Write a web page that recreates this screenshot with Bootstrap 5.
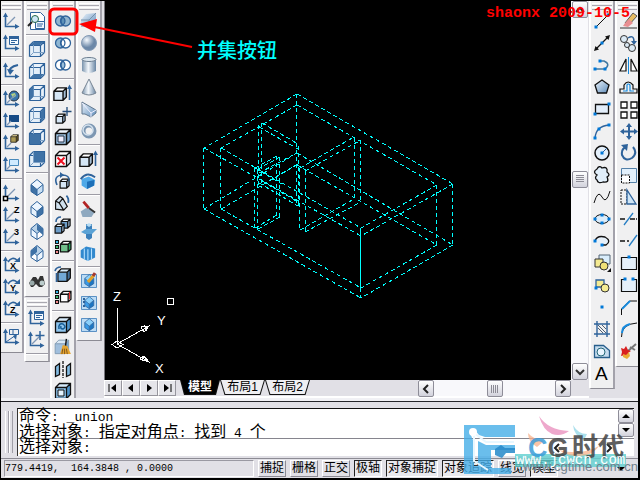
<!DOCTYPE html>
<html lang="zh-CN">
<head>
<meta charset="utf-8">
<meta name="viewport" content="width=device-width, initial-scale=1">
<title>并集 union</title>
<link href="https://cdn.jsdelivr.net/npm/bootstrap@5.3.0/dist/css/bootstrap.min.css" rel="stylesheet">
<style>
body{background:#e1e0e6;color:#000;font-family:"Liberation Sans","Noto Sans CJK SC",sans-serif;border:1px solid #000;border-right-width:2px;border-bottom-width:2px;overflow:hidden}
button{padding:0;border:0;background:none;color:#000}
.workarea,.pane{min-height:0;min-width:0}
.tb{width:26px;background:#f0f0f1;border-left:2px solid #fff;border-right:2px solid #a3a2ab;border-bottom:1px solid #8c8b94;padding-bottom:4px;margin-bottom:1px}
.tb-first{width:23px;border-left:0}
.tb-last{width:23px;border-right:0}
.grip{height:9px;padding:2px 1px 0}
.grip i{display:block;height:3px;border-top:1px solid #fff;border-bottom:1px solid #a9a8b0;margin-bottom:1px}
.tool{height:22px;width:22px;line-height:0}
.tool svg{width:22px;height:22px;overflow:visible}
.rule-line{height:6px;padding-top:2px}
.rule-line i{display:block;height:2px;background:#9d9ca5;border-bottom:1px solid #fff}
.bars-left{margin-right:2px}
.drawing{background:#000;min-width:0;min-height:0;border-left:1px solid #77767d}
.drawing svg{display:block}
.vscroll{width:17px;background:#f9f9fc;margin-right:1px}
.above{flex:153}
.below{flex:176}
.sb{width:16px;height:17px;border:1px solid #8e8d98;border-radius:2px;background:linear-gradient(#fff,#d2d2dc);line-height:0}
.sb svg{width:10px;height:10px}
.sb-short{height:14px}
.sb-flat{border:0;background:none;height:16px}
.sheetbar{height:18px;border-bottom:2px solid #fff;margin-bottom:3px}
.navb{width:18px;height:16px;border:1px solid #fff;border-right-color:#96959d;border-bottom-color:#96959d;background:#e5e5ea;line-height:0}
.navb svg{width:12px;height:12px}
.sheet{height:15px;font-size:12px;line-height:14px;width:45px;clip-path:polygon(0 0,100% 0,90% 100%,10% 100%);background:#111;padding:0 1px 1px}
.sheet span{display:block;height:14px;background:#eeeef1;clip-path:polygon(0 0,100% 0,90% 100%,10% 100%)}
.sheet.current{width:40px;font-weight:700;color:#fff}
.sheet.current span{background:#000}
.hscroll{width:153px;height:16px;background:#f8f8fb;margin-right:18px}
.cmd{border-top:1px solid #24242a;padding:6px 4px 2px 4px;box-shadow:0 -3px 0 #f1f1f5;position:relative}
.cmdgrip{width:8px;margin:3px 4px 3px 0}
.cmdgrip i{width:4px;border-left:1px solid #fff;border-right:1px solid #9f9ea7}
.cmdtext{background:#fff;border-top:1px solid #111;border-left:1px solid #333;font-size:16px;line-height:14px}
.mono{font-family:"Liberation Mono",monospace;font-size:13px}
.history{height:29px;padding-left:1px;white-space:pre}
.prompt{border-top:1px solid #86858e;height:18px;padding:1px 0 0 1px}
.prompt input{border:0;outline:0;background:transparent;height:14px;min-width:0}
.prompt-nav{width:68px;margin-right:17px}
.status{height:20px;border-top:1px solid #8c8b94;padding:1px 3px;font-size:12px;line-height:16px;gap:4px}
.coords{width:250px;height:17px;border:1px solid #9a99a2;border-right-color:#fff;border-bottom-color:#fff;font-family:"Liberation Mono",monospace;font-size:10px;line-height:16px;white-space:pre}
.mode{height:17px;padding:0 1px;border:1px solid #fff;border-right-color:#8c8b94;border-bottom-color:#8c8b94;white-space:nowrap;line-height:15px}
.mode.on{border-color:#222 #fff #fff #222;background:#e9e9ee}
.overlay{left:0;top:0;pointer-events:none}
.stamp{right:8px;top:4px;color:#f00;font:700 15px/18px "Liberation Mono",monospace}
.callout{left:196px;top:37px;color:#0ff;font-size:20px;line-height:24px;font-weight:500;font-family:"Noto Sans CJK SC",sans-serif}
.brand{right:10px;bottom:3px;width:165px;height:55px;pointer-events:none;overflow:visible}
</style>
<script src="https://cdn.jsdelivr.net/npm/bootstrap@5.3.0/dist/js/bootstrap.bundle.min.js"></script>
</head>
<body class="d-flex flex-column vh-100 position-relative">
<svg width="0" height="0" class="position-absolute" aria-hidden="true"><defs>
<linearGradient id="gb" x2="1" y2="1"><stop stop-color="#eef5fc"/><stop offset="1" stop-color="#5f8dbb"/></linearGradient>
<linearGradient id="gh"><stop stop-color="#7892ac"/><stop offset=".45" stop-color="#f4f8fc"/><stop offset="1" stop-color="#6885a3"/></linearGradient>
<radialGradient id="gs" cx=".35" cy=".3"><stop stop-color="#f6faff"/><stop offset="1" stop-color="#6c88a8"/></radialGradient>
</defs></svg>

<main class="workarea d-flex flex-grow-1 overflow-hidden">
  <div class="bars-left d-flex align-items-start" id="left"></div>
  <section class="pane d-flex flex-column flex-grow-1">
    <div class="pane d-flex flex-grow-1">
      <div class="drawing flex-grow-1 overflow-hidden">
        <svg width="466" height="380" viewBox="105 1 466 380" role="img" aria-label="线框模型">
          <g fill="none" stroke="#0ff" stroke-width="1" stroke-dasharray="4 3" shape-rendering="crispEdges">
            <path d="M297 94L204 148M297 94L453 184M204 148L361 236M453 184L361 236"/>
            <path d="M297 105L221 148M297 105L437 185M221 148L361 228M437 185L361 228"/>
            <path d="M297 153L204 209M297 153L453 245M204 209L361 298M453 245L361 298"/>
            <path d="M297 165L221 209M297 165L437 245M221 209L361 288M437 245L361 288"/>
            <path d="M203.500 148V209M220.500 148V209M436.500 185V245M452.500 184V245M296.500 94V206M360.500 288V298"/>
            <path d="M258.500 125V185M261.500 123V188M298.500 146V206M262 123L298 144M259 127L298 149M259 183L298 206M262 181L298 202"/>
            <path d="M254.500 168V228M257.500 170V230M276.500 156V216M279.500 157V217M255 168L277 156M258 169L280 157M255 228L277 215M258 229L280 217"/>
            <path d="M299.500 168V230M305.500 171V232M354.500 138V200M360.500 140V202M300 168L354 137M305 171L361 140M300 230L354 199M305 232L361 202"/>
            <path d="M255 168L282 184M259 173L297 153M270 180L298 164"/>
          </g>
          <path d="M360.500 228V288" stroke="#0ff" shape-rendering="crispEdges"/>
          <g fill="none" stroke="#fff" shape-rendering="crispEdges">
            <path d="M117.500 308V344M117 344L149 326M117 344L149 362M112 344.500L117 341L123 344.500L117 348ZM149 326L141 327L144 332ZM144 325L147 331M149 362L140 359L144 356ZM145 356L142 361"/>
            <rect x="167.500" y="298.500" width="6" height="6"/>
          </g>
          <g fill="#fff" font-family="Liberation Sans" font-size="13"><text x="113" y="301">Z</text><text x="157" y="325">Y</text><text x="155" y="373">X</text></g>
        </svg>
      </div>
      <div class="vscroll d-flex flex-column align-items-center">
        <button class="sb" aria-label="向上"><svg viewBox="0 0 10 10"><path d="M1 7l4-4 4 4" fill="none" stroke="#333" stroke-width="2"/></svg></button>
        <div class="above"></div>
        <button class="sb" aria-label="滑块"><svg viewBox="0 0 10 10"><path d="M1 1.500h8M1 3.500h8M1 5.500h8M1 7.500h8" stroke="#8d8c96"/></svg></button>
        <div class="below"></div>
        <button class="sb" aria-label="向下"><svg viewBox="0 0 10 10"><path d="M1 3l4 4 4-4" fill="none" stroke="#333" stroke-width="2"/></svg></button>
      </div>
    </div>
    <div class="sheetbar d-flex align-items-start">
      <button class="navb" aria-label="首页"><svg viewBox="0 0 12 12"><path d="M2 2v8" stroke="#000"/><path d="M9 2v8L4 6z"/></svg></button>
      <button class="navb" aria-label="上一页"><svg viewBox="0 0 12 12"><path d="M8 2v8L3 6z"/></svg></button>
      <button class="navb" aria-label="下一页"><svg viewBox="0 0 12 12"><path d="M4 2v8l5-4z"/></svg></button>
      <button class="navb me-1" aria-label="末页"><svg viewBox="0 0 12 12"><path d="M10 2v8" stroke="#000"/><path d="M3 2v8l5-4z"/></svg></button>
      <button class="sheet current"><span>模型</span></button>
      <button class="sheet"><span>布局1</span></button>
      <button class="sheet"><span>布局2</span></button>
      <div class="hscroll d-flex justify-content-between ms-auto">
        <button class="sb" aria-label="向左"><svg viewBox="0 0 10 10"><path d="M7 1L3 5l4 4" fill="none" stroke="#222" stroke-width="2"/></svg></button>
        <button class="sb" aria-label="滑块"><svg viewBox="0 0 10 10"><path d="M1.500 1v8M3.500 1v8M5.500 1v8M7.500 1v8" stroke="#8d8c96"/></svg></button>
        <button class="sb" aria-label="向右"><svg viewBox="0 0 10 10"><path d="M3 1l4 4-4 4" fill="none" stroke="#222" stroke-width="2"/></svg></button>
      </div>
    </div>
  </section>
  <div class="d-flex align-items-start" id="right"></div>
</main>

<section class="cmd d-flex">
  <div class="cmdgrip d-flex"><i></i><i></i></div>
  <div class="cmdtext flex-grow-1">
    <div class="d-flex">
      <div class="history flex-grow-1"><div>命令<span class="mono">: _union</span></div><div>选择对象<span class="mono">: </span>指定对角点<span class="mono">: </span>找到<span class="mono"> 4 </span>个</div></div>
      <div class="d-flex flex-column">
        <button class="sb sb-short" aria-label="上滚"><svg viewBox="0 0 10 10"><path d="M1 7l4-4 4 4z"/></svg></button>
        <button class="sb sb-short" aria-label="下滚"><svg viewBox="0 0 10 10"><path d="M1 3l4 4 4-4z"/></svg></button>
      </div>
    </div>
    <div class="prompt d-flex"><label for="c">选择对象<span class="mono">:</span></label><input id="c" class="flex-grow-1" type="text">
      <div class="prompt-nav d-flex justify-content-between">
        <button class="sb sb-flat" aria-label="左滚"><svg viewBox="0 0 10 10"><path d="M7 1L3 5l4 4" fill="none" stroke="#222" stroke-width="2"/></svg></button>
        <button class="sb sb-flat" aria-label="右滚"><svg viewBox="0 0 10 10"><path d="M3 1l4 4-4 4" fill="none" stroke="#222" stroke-width="2"/></svg></button>
      </div>
    </div>
  </div>
</section>

<footer class="status d-flex">
  <div class="coords">779.4419,  164.3848 , 0.0000</div>
  <button class="mode">捕捉</button><button class="mode">栅格</button><button class="mode">正交</button><button class="mode on">极轴</button><button class="mode on">对象捕捉</button><button class="mode on">对象追踪</button><button class="mode">线宽</button><button class="mode on">模型</button>
  <button class="ms-auto me-2" aria-label="状态栏菜单"><svg width="12" height="8" viewBox="0 0 12 8"><path d="M2 2h8L6 6z"/></svg></button>
</footer>

<svg class="overlay position-absolute" width="200" height="60" viewBox="1 1 200 60" aria-hidden="true">
  <rect x="50" y="9" width="27" height="25" rx="4" fill="none" stroke="#f00" stroke-width="3"/>
  <path d="M192 47L92 26.500" stroke="#f00" stroke-width="2"/><path d="M79 24l18-5-2 13z" fill="#f00"/>
</svg>
<div class="callout position-absolute">并集按钮</div>
<div class="stamp position-absolute">shaonx 2009-10-5</div>
<svg class="brand position-absolute" viewBox="464 420 165 55">
  <rect x="516" y="454" width="111" height="13" fill="#5fd0cf" opacity=".8"/>
  <g opacity=".75"><path fill="#e98bbb" d="M540 416q9 14 30 15q-8 6-17 3q-9-4-13-18z"/><path fill="#8fd6e6" d="M574 425q5 9 14 9l-3 6q-10-4-11-15z"/><path fill="#f7b18a" d="M529 433q5 6 16 8l-7 6q-9-5-9-14zM560 450q22 6 40-4q-7 11-24 10-10-1-16-6z"/></g>
  <g fill="#46aee8" opacity=".8"><path d="M465 425h51v12h-30l-6-2-5-6-4 3 2 6 2 4v24h7l4 8h-21z"/><path d="M479 441l8 4h29v5h-24v18h20v6h-27l-6-8z"/></g>
  <path d="M496 449l6-4 4 3h10v5h-9l-4 5-7-3z" fill="#2588c9" opacity=".85"/>
  <path d="M475 433l12 9h28M475 433v28l14 9" fill="none" stroke="#e7f7ff" stroke-width="2"/><circle cx="474" cy="432" r="4" fill="#fff"/>
  <g font-weight="700" opacity=".85"><text x="529" y="457" font-size="27" font-family="Liberation Sans"><tspan fill="#3c9cd8">C</tspan><tspan fill="#444">G</tspan></text><text x="573" y="456" font-size="26" font-family="Noto Sans CJK SC" fill="#444">时代</text></g>
  <text x="517" y="464" font-family="Liberation Mono" font-size="14" fill="#fff">www.jcwcn.com</text>
  <text x="524" y="471" font-family="Liberation Sans" font-size="13" fill="#71808c">www.cgtime.com.cn</text>
</svg>

<script>
const B='#2f639b', K='#111', L='#d5e6f5', D='#3f72a6';
const p=(d,s=B,w=1,f='none')=>`<path d="${d}" stroke="${s}" stroke-width="${w}" fill="${f}"/>`;
const f=(d,c)=>`<path d="${d}" fill="${c}"/>`;
const t=(x,y,s)=>`<text x="${x}" y="${y}" font-family="Liberation Sans" font-weight="700" font-size="9">${s}</text>`;
const node=(x,y)=>`<rect x="${x-1.5}" y="${y-1.5}" width="3" height="3" fill="#0078d8"/>`;
const fit=x=>`<g transform="translate(0 1) scale(.9)">${x}</g>`;
const axes=p('M4.500 6v10.500H15',B,1.6)+f('M4.500 2.500l2.500 4.500h-5zM18.500 16.500l-4.500-2.500v5z',B);
const ax=x=>axes+`<g transform="translate(-1 0)">${x}</g>`;
const diag=p('M7 15l8-8','#7f97b5',1.3);
const cube=(top,front,right,s=B,w=1.2)=>f('M3.500 7.500l4-4h11l-4 4z',top)+f('M3.500 7.500h11v11h-11z',front)+f('M14.500 7.500l4-4v11l-4 4z',right)+p('M3.500 7.500l4-4h11v11l-4 4h-11zM3.500 7.500h11v11M14.500 7.500l4-4',s,w);
const wire=x=>cube('#e9f2fb','#e3eef8','#e9f2fb')+p('M7.500 3.500v11h11M3.500 18.500l4-4','#7fa2c6')+x;
const small=(x,y,c=L)=>`<g transform="translate(${x} ${y}) scale(.6)">${cube('#eef6ff',c,'#9dbbd9',K,2)}</g>`;
const iso=(a,b,c)=>f('M11 3.500l6 5-6 5-6-5z',a)+f('M5 8.500l6 5v6l-6-4z',b)+f('M17 8.500l-6 5v6l6-4z',c)+p('M11 3.500l6 5v7l-6 4-6-4v-7zM5 8.500l6 5 6-5M11 13.500v6');
const rings=(a,b,m)=>`<circle cx="8.500" cy="11" r="5" fill="${a}" stroke="${B}" stroke-width="1.300"/><circle cx="13.500" cy="11" r="5" fill="${b}" stroke="${B}" stroke-width="1.300"/>`+p('M11 6.800q4 4.200 0 8.400q-4-4.200 0-8.400z',B,1.2,m);
const curl=p('M8 8q4-6 9-2',B,1.6)+f('M14 8h6V3z',B);
const sheet=p('M9.500 4.500h9v8h-9zM11 8.500h6M11 10.500h4',B,1,'#f5faff')+f('M9 4h10v3H9z',B);
const up=p('M17.500 18V6',B,1.6)+f('M17.500 2.500l2.500 4.500h-5z',B);
const tall=`<g transform="translate(-1 3) scale(.83)">${cube('#fff',L,'#a3bdd4',K,1.7)}</g>`;
const panel=f('M3 4h16v14H3z','#bcdcf5')+p('M3.500 4.500h15v13h-15z','#5b91c4')+`<g transform="translate(3 2) scale(.75)">${iso('#8bd0fb','#3a9be7','#1c76c2')}</g>`;
const list='<rect x="3.500" y="4.500" width="3" height="3" fill="#35b5e8" stroke="#111"/><rect x="3.500" y="9.500" width="3" height="3" fill="#39b96e" stroke="#111"/><rect x="3.500" y="14.500" width="3" height="3" fill="#e88" stroke="#111"/>';
const S='|';
const bars={left:[
 [['tb-first',[ax(diag),ax(sheet),S,ax(p('M10 13q-2-6 8-8',B,2)+f('M7 9l3 6 4-5z',B)),S,
  ax('<circle cx="14" cy="8" r="5" fill="#3a75ad" stroke="#234"/><path d="M11 6l4-1 1 3-3 2z" fill="#b4d37d"/>'+diag),ax(f('M9 5h10v7H9z','#164b86')+p('M7 15l4-4','#7f97b5',1.3)),ax(`<g transform="translate(9 1) scale(.5)">${cube('#eedd99','#aa9955','#665522',K,1.5)}</g>`+p('M7 15l4-4','#7f97b5',1.3)),ax(p('M9.500 5.500h9v6h-9z','#4889bb',1,'#d0ebff')+p('M7 15l3-3','#7f97b5',1.3)),S,
  ax(diag+'<rect x="3.500" y="14.500" width="4" height="4" fill="#fff" stroke="#000" stroke-width="1.500"/>'),ax(diag+t(14,9,'Z')),ax(diag+t(14,9,'3')),S,ax(curl+t(10,15,'X')),ax(curl+t(10,15,'Y')),ax(curl+t(10,15,'Z')),S,ax(p('M9.500 3.500h9v5h-9zM13 3v5M6 16L16 9',B,1)+f('M17 8l-1 6-3-4z',B))]]],
 [['',[p('M4.500 2.500h10l4 4v13h-14z',B,1,'#fff')+p('M9.500 11.500h9v7h-9zM11 14h6M11 16h5',B,1,'#eef6ff')+'<circle cx="9" cy="9" r="3.500" fill="#cfe8f7" stroke="#264"/>'+p('M6 12l-4 4','#222',2),S,
  wire(f('M4 7l4-3h10l-4 3z',D)),wire(f('M4 18l4-4h10l-4 4z',D)),wire(f('M4 7.500l3.500-4v11L4 18z',D)),wire(f('M15 7.500l3-3.500v10l-3 4z',D)),wire(f('M4 8h10v10H4z',D)),wire(f('M8 4h10v10H8z',D)),S,
  iso('#edf6ff',D,'#c8dff4'),iso('#edf6ff','#e5f1fc',D),iso('#b9d2e8','#edf6ff','#fff')+f('M11 4l6 5v6l-6-5z',D),iso('#b9d2e8','#fff','#edf6ff')+f('M11 4l-6 5v6l6-5z',D),S,
  f('M3 13l4-6h3l2 3 2-4h3l2 8-3 3h-3l-3-3-3 3H5z','#333')+'<circle cx="6" cy="13" r="2.500" fill="#9aa"/><circle cx="16" cy="13" r="2.500" fill="#bcc"/>']],
  ['',[ax(sheet),ax(diag+p('M15 2v9M10.500 6.500h9',B,1.5)),S]]],
 [['',[rings('#91b5cf','#91b5cf','#5d91b8'),rings('#8fb7d4','#fff','#fff'),rings('#fff','#fff','#9cc0da'),S,
  tall+up,small(2,8)+p('M15 3v9M10.500 7.500h9','#234b79',1.3),cube('#eef6ff','#a5c9e8','#7aa9d3',K,1.5)+p('M6 10h6v6H6z','#234',1,'#eef'),cube('#fff','#fff','#d5e2ec',K,1.3)+p('M5.500 9.500l7 7M12.500 9.500l-7 7','#e12',2),small(6,7)+p('M5 15Q1 6 10 5q8 0 7 6',B,1.6)+f('M8 2v6l4-3z',B),
  fit(p('M4 18V9l5-5 3 2 5 9-4 4zM4 9l4 2 5 8M8 11l4-5',K,1.3,'#cfe0ed')+p('M18 11q1-5-2-8',B,2)),small(7,3,'#6d9dc8')+small(1,8,'#6d9dc8')+p('M4 8q0-5 5-5',B,1.6),list+`<g transform="translate(6 3) scale(.7)">${cube('#fff','#72bf8b','#28a75b',K,1.8)}</g>`,S,
  `<g transform="translate(3 2) scale(.83)">${cube('#d6ebfb','#72a9d7','#43709a',K,1.5)}</g>`+p('M4.500 18V9M3 7q1-4 6-4',B,1.6),list+`<g transform="translate(6 3) scale(.7)">${cube('#fff','#fff','#f4caca',K,1.8)}</g>`+p('M17.500 6v7','#e33',1),S,
  cube('#d6ebfb','#8ec4ed','#4e94cc',K,1.3)+p('M7 15q-1-6 4-5 4 3 0 5-3 0-2-3','#155c94',1.5),fit(cube('#d7e7f5','#a0bfdd','#7da7cf','#7d98b1',1)+p('M16 2l-1 8',K,1.5)+f('M12 9l5 1 4 9H9z','#e6a530')+p('M12 13l-1 6M14 13v6M16 13l1 6','#76501b')),p('M3.500 8.500l4-3v11l-4 2zM14.500 8.500l4-3v11l-4 2z',K,1.3,'#83bce3')+p('M11 3v17',K,1.3).replace('/>',' stroke-dasharray="3 1"/>'),cube('#d6ebfb','#8ec4ed','#4e94cc',K,1.3)+p('M6 10h6v6H6z',K,1,'#e4f4ff')]]],
 [['',[f('M3 10l5-6 10-1v9l-4 5H3z','url(#gb)')+p('M3 10h8l7-7M11 10v7','#7792ab'),'<circle cx="11" cy="11" r="7.500" fill="url(#gs)" stroke="#8299b4"/>',f('M4 5q7-3 14 0v12q-7 4-14 0z','url(#gh)')+'<ellipse cx="11" cy="5.500" rx="7" ry="2" fill="#dce7ef" stroke="#6c7e90"/>',p('M11 3L4 17q7 4 14 0z','#778594',1,'url(#gh)'),p('M4 4v12h3l6 3 5-4v-3z','#62788f',1,'url(#gb)')+p('M4 5l9 10 5-3M13 15v4','#eef',1),'<circle cx="11" cy="11" r="5.500" fill="none" stroke="#7d97b2" stroke-width="4"/><circle cx="10" cy="10" r="5" fill="none" stroke="#d5e2ee" stroke-width="1.500"/>',S,
  tall+up,fit(f('M4 9l8-3 7 4-1 6-8 4-6-4z','#4fa9e8')+f('M10 12l8-2v6l-8 4z','#1e70b8')+p('M3 9q7-9 16-2',B,2)),S,
  fit(f('M3 14l6-4 10 4-4 6H5z','#8fa9c0')+p('M6 3l6 7','#b22424',3)+p('M12 10l7 5','#333',2)),f('M8 4h6v14l-3 2-3-2z','#3c80bb')+f('M3 12l5-3h11l-5 5H7z','#5ba2d5')+f('M8 5l3-2 3 2-3 2z','#b6dcf4'),fit(f('M3 8l6-4 10 2v10l-8 4-8-4z','#3289ce')+p('M7 6v12M11 7v13M15 6v12','#b4e0ff',1.2)),S,
  panel+p('M10 12l6-7','#e2a128',3)+p('M15 6l2-3','#a43932',3),panel+p('M5 7h2M5 10h2M5 14h2',B,2),panel]]]],
right:[
 [['',[p('M5 17L17 5',K)+node(5,17)+node(17,5),p('M5 17L17 5',K,1.3)+f('M3 19l1.500-5 3.500 3.500zM19 3l-1.500 5L14 4.500z',K)+node(11,11),p('M4 15h10q6-5-1-8H9','#4178a0',1.5)+node(4,15)+node(14,15)+node(9,7),p('M11 4l7 5-2.500 8h-9L4 9z',K,1.3,'url(#gb)'),p('M4.500 6.500h13v9h-13z',K,1.3,'#e3eefa')+node(4,16)+node(18,6),p('M4 18Q5 6 18 5',B,1.3)+node(4,18)+node(8,9)+node(18,5),'<circle cx="11" cy="11" r="7" fill="#e3effa" stroke="#111" stroke-width="1.500"/>'+p('M11 11l5-5',B)+node(11,11),p('M6 11q-5-3 0-6 2-4 5-1 6-2 5 4 4 3 0 5 3 6-4 5-5 2-6-2-3-2 0-5z',K,1.3,'#e2effa'),p('M3 17Q7 3 11 11t8-6',K),'<ellipse cx="11" cy="11" rx="7" ry="4.500" fill="#dbecfa" stroke="#111"/>'+node(4,11)+node(18,11)+node(11,7)+node(11,15),p('M4 11q2-6 10-4 7 4 1 8H10',K,1.3,'#e7f1fa')+node(4,11)+node(11,15),p('M8 3h11v9H8z','#567',1,'#d9edfb')+p('M4 7h8v8H4z','#333',1,'#f5ea91')+'<circle cx="13" cy="14" r="4" fill="#efe077" stroke="#333"/>'+f('M20 16v4h-4z',K),p('M5 6h8v7H5z',B,1.3,'#f5ec92')+'<circle cx="14" cy="14" r="4" fill="#f5ec92" stroke="#333"/>'+node(5,14),node(11,11),p('M3 6h16M3 16h16M6 3v16M16 3v16',B,1.4)+p('M7 10l5 5M7 7l8 8M11 7l4 4','#4c6075'),p('M3.500 5.500h9l6 5v7h-15z','#285f8c',1.3,'#c5dbee')+'<circle cx="10" cy="12" r="4" fill="#e9f5ff" stroke="#267"/>','<text x="4" y="18" font-family="Liberation Sans" font-size="19">A</text>']]],
 [['tb-last',[p('M8 13l8-10 4 3-9 10z','#555',1,'#e7bd62')+f('M8 13l4-4 4 4-5 4-5-1z','#e88e91')+p('M3 18h17','#333'),'<circle cx="7" cy="7" r="3.500" fill="#dbe9f4" stroke="#333"/><circle cx="15" cy="16" r="3.500" fill="#dbe9f4" stroke="#333"/>'+p('M11 6q6-4 6 4',B,1.5)+f('M14 9h6l-3 4z',B)+'<circle cx="10" cy="13" r="2.500" fill="#dbe9f4" stroke="#333"/>',p('M9 5v12H3zM14 5v12h6z',K,1.2,'#fff')+p('M11.500 3v17','#168ade'),p('M3 17v-4h4V9q4-6 9 0v4h4v4z',K,1.2)+p('M6 15h4V9q1-2 3 0v6h4','#168ade',1.2),p('M4 4h6v6H4zM14 4h6v6h-6zM4 14h6v6H4zM14 14h6v6h-6z',K,1.3,'#fff'),p('M12 5v13M5 11.500h14',B,2)+f('M12 3l3 4H9zM12 20l3-4H9zM3 11.500l4-3v6zM21 11.500l-4-3v6z',B),p('M16 5q5 6-1 11-7 4-10-3Q4 6 10 5',B,2)+f('M4 3l7-1-1 7z',B),p('M4.500 4.500h15v14h-15z','#5481a8',1,'#e2f0fb')+p('M4.500 11h8v8h-8z',K,1,'#fff').replace('/>',' stroke-dasharray="2 1"/>'),p('M4 4h6v14H4z',K,1).replace('/>',' stroke-dasharray="2 1"/>')+p('M10 18V4l9 14z',B,1.3,'#cfe5f5'),p('M3 11h5M13 11h7',K,1.5).replace('/>',' stroke-dasharray="5 1 2 1"/>')+p('M7 17L16 5','#267ec4',1.3),p('M3 11h9',K,1.5).replace('/>',' stroke-dasharray="5 2"/>')+p('M12 16l8-11','#267ec4',1.3),p('M4.500 5.500h15v12h-15z',K,1.2,'#e5f0fa')+node(12,5),p('M8 5.500H4.500v12h15v-12H16',K,1.2,'#e5f0fa')+node(8,5)+node(16,5),p('M4.500 19v-6l8-8H20',K)+p('M5 13l8-8','#168ade',1.8),p('M4.500 19Q4 6 20 5',K)+p('M5 15Q5 8 13 6','#168ade',2),p('M11 11l8-7M13 7l5 3','#777',2)+f('M4 8l3 1 2-3 2 4 3 1-3 2 1 4-4-2-4 1 1-4z','#d92020')+f('M6 14l3 1 3-3 1 4-3 3-4-2z','#e9ab35')]]]]};
let n=0;
for(const side in bars) document.getElementById(side).innerHTML=bars[side].map(c=>'<div class="d-flex flex-column">'+c.map(([k,a])=>
 `<div class="tb ${k} d-flex flex-column" role="toolbar"><div class="grip"><i></i><i></i></div>`+a.map(x=>x===S?'<div class="rule-line"><i></i></div>':`<button class="tool" aria-label="工具 ${++n}"><svg viewBox="0 0 22 22">${x}</svg></button>`).join('')+'</div>').join('')+'</div>').join('');
</script>
</body>
</html>
